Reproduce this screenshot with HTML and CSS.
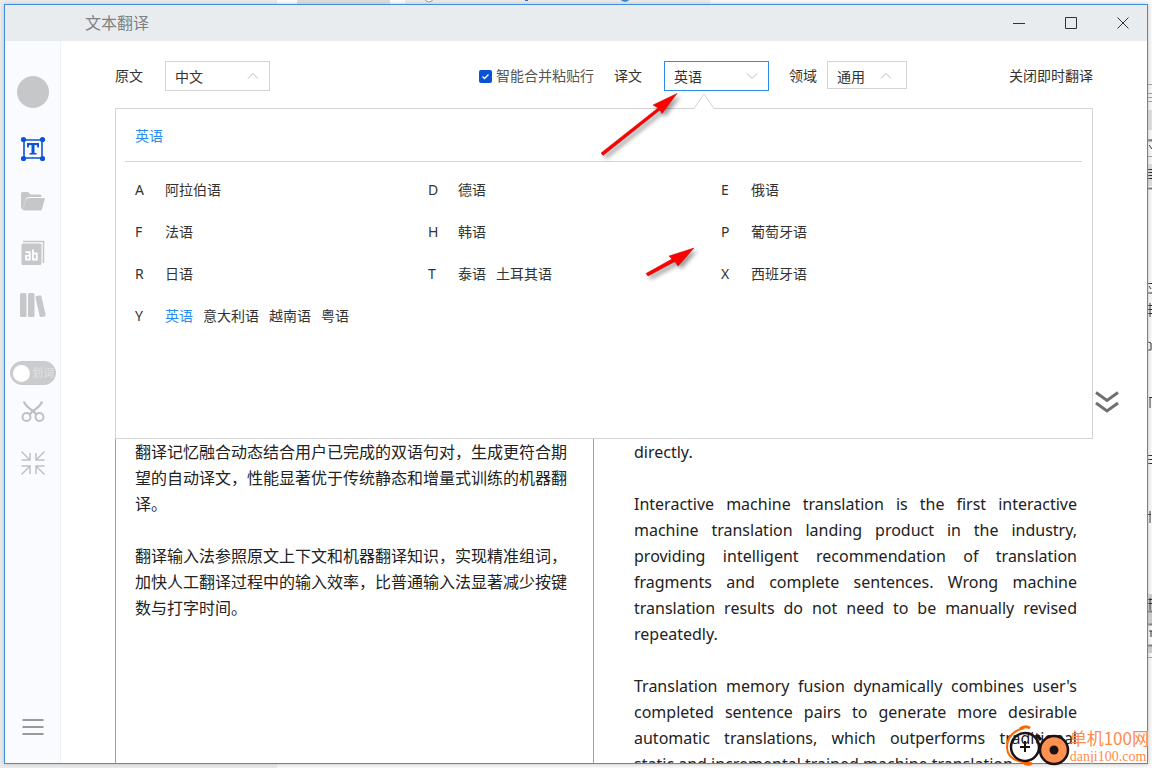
FILE: index.html
```html
<!DOCTYPE html>
<html lang="zh-CN">
<head>
<meta charset="utf-8">
<title>文本翻译</title>
<link rel="stylesheet" href="styles.css">
</head>
<body>
<svg class="desk-top" width="480" height="4" aria-hidden="true">
  <rect x="0" width="20" height="4" fill="#fff"/><rect x="20" width="93" height="4" fill="#dcdcdc"/><rect x="113" width="15" height="4" fill="#fff"/><rect x="128" width="305" height="4" fill="#ececec"/>
  <circle cx="152" cy="-2" r="4" fill="#fff" stroke="#999"/><rect x="248" width="3" height="1" fill="#2468e8"/><circle cx="348" cy="-3" r="5" fill="#2b87d3"/>
</svg>
<svg class="desk-right" width="4" height="768" aria-hidden="true">
  <path d="M0 84.500h4M0 93.500h4M0 97.500h4M0 101.500h4M0 139.500h4M0 156.500h4M0 657.500h4" stroke="#999"/>
  <path d="M0 110h4v20h-4zM0 164h4v22h-4z" fill="#ddd"/>
  <path d="M0 594h4v17h-4zM0 611h4v13h-4zM0 645h4v8h-4z" fill="#ccc"/>
  <path d="M0 140.500h4M0 188.500h4M0 611.500h4M0 624.500h4M0 645.500h4" stroke="#777" stroke-width="2"/>
  <path d="M1 145l3 4M0 169.500h4M0 172.500h4M0 175.500h4M0 178.500h4M0 283.500h4M1 286l2 3M0 293l4 0M0 305.500h4M0 309.500h4M0 313.500h4M2 303v14M0 342l3 1v7l-3 0M1 397.500h3M2 397v11M0 455.500h4M0 459.500h4M0 463.500h4M0 514.500h3M2 511v12M0 599.500h4M0 603.500h4M2 598v12M1 631h3M3 631v6" stroke="#222" fill="none"/>
</svg>

<div class="window">
  <header class="titlebar">
    <h1 class="title">文本翻译</h1>
    <div class="window-controls">
      <button class="win-btn" aria-label="最小化"><svg width="14" height="14"><path d="M1 7.500h12"/></svg></button>
      <button class="win-btn" aria-label="最大化"><svg width="14" height="14"><path d="M1.500 1.500h11v11h-11z"/></svg></button>
      <button class="win-btn" aria-label="关闭"><svg width="14" height="14"><path d="M1.500 1.500l11 11M12.500 1.500l-11 11"/></svg></button>
    </div>
  </header>

  <div class="body">
    <nav class="sidebar">
      <button class="avatar" aria-label="用户"></button>
      <button class="side-btn active" aria-label="文本翻译">
        <svg width="28" height="28"><path d="M5 5h18v18h-18z" fill="none" stroke="#0a53d8" stroke-width="1.600"/><path d="M8 8h12v4.500h-1.500l-.8-2.500h-2.200v8h2v1.500h-7v-1.500h2v-8h-2.200l-.8 2.500h-1.500z" fill="#0a53d8"/><g fill="#0a53d8"><circle cx="4.500" cy="4.500" r="2.600"/><circle cx="23.500" cy="4.500" r="2.600"/><circle cx="4.500" cy="23.500" r="2.600"/><circle cx="23.500" cy="23.500" r="2.600"/></g></svg>
      </button>
      <button class="side-btn" aria-label="文档翻译">
        <svg width="28" height="28"><path d="M2 21.500v-15q0-1.500 1.500-1.500h5.500l2.500 2.500h9.500q1.500 0 1.500 1.500v1h-13q-2 0-2.500 1.500l-3 10.500z" fill="#c6c7c9"/><path d="M9.500 11h15.500q1.200 0 .8 1.300l-2.800 10q-.5 1.200-1.700 1.200h-16.800q-1 0-.7-1l3-9.800q.6-1.700 2.700-1.700z" fill="#c6c7c9"/></svg>
      </button>
      <button class="side-btn" aria-label="词典">
        <svg width="28" height="28"><path d="M4 2.500h20.500v21.500" fill="none" stroke="#c6c7c9" stroke-width="1.500"/><rect x="2.500" y="4.500" width="20" height="21.500" rx="1.500" fill="#c6c7c9"/><path d="M6.500 13.200h4.300v7.300h-3.800v-3.800h3.800M14 10.500v10h3.800v-6h-3.800" fill="none" stroke="#fff" stroke-width="1.800"/></svg>
      </button>
      <button class="side-btn library" aria-label="语料库">
        <svg width="28" height="28" fill="#c6c7c9"><rect x="1" y="2" width="6.500" height="24" rx="1.500"/><rect x="9" y="2" width="6.500" height="24" rx="1.500"/><rect x="18.500" y="4.500" width="6" height="21.500" rx="1.500" transform="rotate(-13 21.500 15)"/></svg>
      </button>
      <label class="toggle"><input type="checkbox" class="toggle-input"><span class="toggle-text">划词</span></label>
      <button class="side-btn" aria-label="截图翻译">
        <svg width="28" height="28" fill="none" stroke="#bfc0c2" stroke-width="2"><path d="M5 4.500q1 4 9 9.500l4 4M23 4.500q-1 4-9 9.500l-4 4" stroke-width="2.400"/><circle cx="7.500" cy="20" r="4"/><circle cx="20.500" cy="20" r="4"/></svg>
      </button>
      <button class="side-btn" aria-label="收起窗口">
        <svg width="28" height="28" fill="none" stroke="#c0c1c3" stroke-width="1.500"><path d="M2.500 2.500l8 8M11 4v7H2.500M25.500 2.500l-8 8M17 4v7h8.500M2.500 25.500l8-8M11 25v-8H2.500M25.500 25.500l-8-8M17 25v-8h8.500"/></svg>
      </button>
      <button class="side-btn menu" aria-label="菜单">
        <svg width="28" height="28" stroke="#999" stroke-width="2"><path d="M3.500 7h21M3.500 14h21M3.500 21h21"/></svg>
      </button>
    </nav>

    <main class="main">
      <div class="toolbar">
        <div class="group">
          <label for="src">原文</label>
          <div class="select-wrap">
            <select id="src" class="select"><option>中文</option></select>
            <svg class="caret" width="12" height="8"><path d="M1 6.500l5-5 5 5"/></svg>
          </div>
        </div>
        <label class="merge"><input type="checkbox" class="check" checked>智能合并粘贴行</label>
        <div class="group target">
          <label for="dst">译文</label>
          <div class="select-wrap">
            <select id="dst" class="select open"><option>英语</option></select>
            <svg class="caret" width="12" height="8"><path d="M1 1.500l5 5 5-5"/></svg>
            <svg class="notch" width="22" height="17"><path d="M1 17v-1.500L11 1l10 14.500v1.500z" fill="#fff"/><path d="M0 15.500h1L11 1l10 14.500h1" fill="none" stroke="#d4d4d4"/></svg>
          </div>
        </div>
        <div class="group domain">
          <label for="field">领域</label>
          <div class="select-wrap small">
            <select id="field" class="select"><option>通用</option></select>
            <svg class="caret" width="12" height="8"><path d="M1 6.500l5-5 5 5"/></svg>
          </div>
        </div>
        <button class="instant">关闭即时翻译</button>
      </div>

      <section class="panel">
        <h2 class="panel-title">英语</h2>
        <div class="lang-grid">
          <div class="lang-row"><span class="letter">A</span><button class="lang">阿拉伯语</button></div>
          <div class="lang-row"><span class="letter">D</span><button class="lang">德语</button></div>
          <div class="lang-row"><span class="letter">E</span><button class="lang">俄语</button></div>
          <div class="lang-row"><span class="letter">F</span><button class="lang">法语</button></div>
          <div class="lang-row"><span class="letter">H</span><button class="lang">韩语</button></div>
          <div class="lang-row"><span class="letter">P</span><button class="lang">葡萄牙语</button></div>
          <div class="lang-row"><span class="letter">R</span><button class="lang">日语</button></div>
          <div class="lang-row"><span class="letter">T</span><button class="lang">泰语</button><button class="lang">土耳其语</button></div>
          <div class="lang-row"><span class="letter">X</span><button class="lang">西班牙语</button></div>
          <div class="lang-row"><span class="letter">Y</span><button class="lang selected">英语</button><button class="lang">意大利语</button><button class="lang">越南语</button><button class="lang">粤语</button></div>
        </div>
      </section>

      <div class="panes">
        <article class="pane source">
          <p>翻译记忆融合动态结合用户已完成的双语句对，生成更符合期望的自动译文，性能显著优于传统静态和增量式训练的机器翻译。</p>
          <p>翻译输入法参照原文上下文和机器翻译知识，实现精准组词，<br>加快人工翻译过程中的输入效率，比普通输入法显著减少按键数与打字时间。</p>
        </article>
        <article class="pane result" lang="en">
          <p>directly.</p>
          <p>Interactive machine translation is the first interactive machine translation landing product in the industry, providing intelligent recommendation of translation fragments and complete sentences. Wrong machine translation results do not need to be manually revised repeatedly.</p>
          <p>Translation memory fusion dynamically combines user's completed sentence pairs to generate more desirable automatic translations, which outperforms traditional static and incremental trained machine translation.</p>
        </article>
      </div>

      <button class="more" aria-label="展开"><svg width="24" height="24"><path d="M1 2.500l11 8 11-8M1 13l11 8 11-8"/></svg></button>
    </main>
  </div>
</div>

<svg class="arrows" width="110" height="200" aria-hidden="true">
  <g fill="#f00" stroke="#c00" stroke-width=".5"><path d="M5 65L62 20 57 17 81 5.500 66 25.500 64 22 7 67.500z"/><path d="M50 185.500L76 171 73 168 98 160 82 178 79 173.500 52 188z"/></g>
</svg>

<div class="watermark">
  <svg width="66" height="44" aria-hidden="true">
    <path d="M20 4Q3 8 3 24Q4 38 26 39" fill="none" stroke="#f60" stroke-width="2"/><path d="M16 5q5-4 10-1M19 38q4 4 9 1" fill="none" stroke="#f60" stroke-width="3"/>
    <circle cx="21" cy="23" r="14" fill="none" stroke="#1c1214" stroke-width="2.500"/><path d="M16 23h10M21 17v11" stroke="#1c1214" stroke-width="2"/>
    <circle cx="50" cy="26" r="14" fill="#ff9150" stroke="#1c1214" stroke-width="2.500"/><circle cx="50" cy="26" r="4.500" fill="#1c1214"/>
    <path d="M33 11l4 5" stroke="#1c1214" stroke-width="3"/>
  </svg>
  <div class="watermark-text"><span class="wm-name">单机100网</span><span class="wm-url">danji100.com</span></div>
</div>
</body>
</html>
```
FILE: styles.css
```css
* { box-sizing: border-box; }
body {
  margin: 0;
  height: 100vh;
  padding: 4px;
  position: relative;
  overflow: hidden;
  background: linear-gradient(90deg, #ebebeb 277px, #fafafa 277px);
  font-family: "Noto Sans", "Noto Sans CJK SC", sans-serif;
  font-size: 14px;
  line-height: 20px;
  color: #333;
}
button, select, input { font: inherit; color: inherit; margin: 0; }
button { border: 0; padding: 0; background: none; }
p, h1, h2 { margin: 0; font-weight: 400; }
svg { display: block; }

.desk-top { position: absolute; top: 0; left: 277px; }
.desk-right { position: absolute; top: 0; right: 0; }

.window {
  height: 100%;
  display: flex;
  flex-direction: column;
  position: relative;
  border: 1px solid #3f8fe0;
  background: #fff;
  box-shadow: 0 0 4px #bbb;
}
.titlebar {
  flex: none;
  height: 36px;
  display: flex;
  align-items: center;
  justify-content: space-between;
  padding: 0 17px 0 80px;
  background: #e8ecef;
}
.title { font-size: 16px; color: #808284; }
.window-controls { display: flex; gap: 38px; }
.win-btn { width: 14px; height: 14px; }
.win-btn path { fill: none; stroke: #333; stroke-width: 1; }

.body { flex: 1; min-height: 0; display: flex; }
.sidebar {
  flex: none;
  width: 56px;
  display: flex;
  flex-direction: column;
  align-items: center;
  gap: 24px;
  padding: 35px 0 22px;
  background: #f9fbff;
  box-shadow: inset -1px 0 #f0f1f3;
}
.avatar { width: 32px; height: 32px; margin-bottom: 3px; border-radius: 50%; background: #c6c7c9; }
.side-btn { width: 28px; height: 28px; }
.library { margin-bottom: 18px; }
.menu { margin-top: auto; }
.toggle {
  width: 46px;
  height: 24px;
  display: flex;
  align-items: center;
  gap: 2px;
  margin-bottom: -12px;
  padding: 0 2px;
  border: 1px solid #c8c9cb;
  border-radius: 12px;
  background: #cbccce;
  white-space: nowrap;
}
.toggle-input { flex: none; appearance: none; width: 17px; height: 17px; border-radius: 50%; background: #fff; }
.toggle-text { font-size: 11px; line-height: 20px; color: #e0e1e3; }

.main {
  flex: 1;
  min-width: 0;
  display: flex;
  flex-direction: column;
  position: relative;
  padding: 20px 54px 0;
}
.toolbar { flex: none; display: flex; align-items: flex-start; line-height: 30px; margin-bottom: 17px; }
.group { display: flex; gap: 22px; }
.select-wrap { position: relative; width: 105px; height: 30px; }
.small { width: 80px; height: 28px; }
.select {
  appearance: none;
  display: block;
  width: 100%;
  height: 100%;
  padding: 0 9px;
  border: 1px solid #d4d4d4;
  border-radius: 0;
  background: #fff;
}
.open { border-color: #2a8cf0; }
.caret { position: absolute; top: 11px; right: 11px; }
.small .caret { right: 15px; }
.caret path { fill: none; stroke: #bbb; }
.notch { position: absolute; top: 32px; left: 29px; z-index: 2; }
.merge { display: flex; align-items: center; gap: 4px; margin-left: auto; color: #555; }
.check {
  appearance: none;
  width: 13px;
  height: 13px;
  border-radius: 2px;
  background: #0a53d8 url("data:image/svg+xml,%3Csvg xmlns='http://www.w3.org/2000/svg' width='13' height='13'%3E%3Cpath d='M3.500 6.500l2 2 4-4' fill='none' stroke='white' stroke-width='1.300'/%3E%3C/svg%3E");
}
.target { margin-left: 20px; }
.domain { margin-left: 20px; gap: 10px; }
.instant { margin-left: 102px; line-height: 30px; }

.panel {
  flex: none;
  min-height: 331px;
  padding: 0 10px 0 9px;
  border: 1px solid #d4d4d4;
  background: #fff;
}
.panel-title {
  padding: 16px 10px 14px;
  border-bottom: 1px solid #d4d4d4;
  font-size: 14px;
  line-height: 22px;
  color: #2a8cf0;
}
.lang-grid {
  display: grid;
  grid-template-columns: 293px 293px 1fr;
  grid-auto-rows: 42px;
  padding: 7px 10px;
}
.lang-row { display: flex; align-items: center; gap: 10px; white-space: nowrap; }
.letter { width: 20px; }
.selected { color: #2a8cf0; }

.panes {
  flex: 1;
  min-height: 0;
  overflow: hidden;
  display: grid;
  grid-template-columns: 479px 1fr;
  font-size: 16px;
  line-height: 26px;
  color: #222;
}
.pane { border-left: 1px solid #a0a0a0; border-right: 1px solid #a0a0a0; }
.pane p { margin-bottom: 26px; }
.source { padding: 0 24px 0 19px; }
.result { border: 0; padding: 0 16px 0 40px; text-align: justify; }

.more { position: absolute; right: 28px; top: 349px; }
.more path { fill: none; stroke: #707070; stroke-width: 3; }

.arrows { position: absolute; left: 596px; top: 88px; z-index: 3; filter: drop-shadow(3px 3px 2px #0006); }
.watermark { position: absolute; right: 3px; bottom: 0; z-index: 4; display: flex; align-items: center; white-space: nowrap; }
.watermark-text { display: flex; flex-direction: column; color: #ff8b4d; }
.wm-name { font-family: "Noto Sans CJK SC", sans-serif; font-size: 17px; line-height: 22px; }
.wm-url { font-family: "Liberation Serif", serif; font-size: 14px; line-height: 16px; }
```
